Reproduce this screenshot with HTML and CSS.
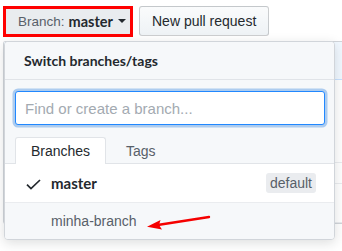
FILE: index.html
```html
<!DOCTYPE html>
<html>
<head>
<meta charset="utf-8">
<link rel="stylesheet" href="styles.css">
</head>
<body>
<div class="page">
  <div class="toolbar">
    <button class="btn branch-btn"><span class="muted">Branch:</span> <span class="strong">master</span><span class="caret"></span></button>
    <button class="btn">New pull request</button>
  </div>
  <div class="highlight"></div>
  <div class="files">
    <div class="files-head"></div>
    <div class="files-row r1"></div>
    <div class="files-row r2"></div>
    <div class="files-row r3"></div>
  </div>

  <div class="menu">
    <div class="menu-header">Switch branches/tags</div>
    <div class="menu-filter">
      <div class="filter-input">Find or create a branch...</div>
    </div>
    <div class="menu-tabs">
      <span class="tab selected">Branches</span>
      <span class="tab">Tags</span>
    </div>
    <div class="menu-item current">
      <svg class="check" viewBox="0 0 15 11" width="15" height="11"><path d="M1 5.6 L5 9.6 L14 1" fill="none" stroke="#24292e" stroke-width="1.7"/></svg>
      <span class="item-name strong">master</span>
      <span class="badge">default</span>
    </div>
    <div class="menu-item hover">
      <span class="item-name">minha-branch</span>
    </div>
  </div>

  <svg class="arrow" width="70" height="20" viewBox="0 0 70 20">
    <line x1="63" y1="2" x2="10" y2="10.2" stroke="#f50000" stroke-width="2.4" stroke-linecap="round"/>
    <path d="M1 11.7 L14.5 5 L13 10 L16 14.5 Z" fill="#f50000"/>
  </svg>
</div>
</body>
</html>
```

FILE: styles.css
```css
* { box-sizing: border-box; }
html, body { margin: 0; background: #fff; }
body {
  font-family: "Liberation Sans", Arial, sans-serif;
  font-size: 14px;
  color: #24292e;
}
.page {
  position: relative;
  width: 342px;
  height: 251px;
  overflow: hidden;
}
.toolbar {
  display: flex;
  align-items: flex-start;
  gap: 8px;
  padding: 6px 0 0 5px;
  height: 41px;
}
.btn {
  font: inherit;
  font-size: 14px;
  height: 30px;
  padding: 0 12px;
  border: 1px solid rgba(27,31,35,.2);
  border-radius: 3px;
  background: linear-gradient(#fafbfc, #eff3f6 90%);
  color: #24292e;
  display: flex;
  align-items: center;
}
.branch-btn {
  width: 126px;
  background: #e9ecef;
  padding-left: 12px;
  font-size: 13.5px;
}
.highlight {
  position: absolute;
  left: 3px;
  top: 6px;
  width: 130px;
  height: 31px;
  border: 3px solid #f00;
}
.muted { color: #586069; }
.branch-btn .muted { margin-right: 4px; }
.strong {
  font-weight: 700;
  font-family: Lato, "Liberation Sans", sans-serif;
  font-size: 15px;
}
.branch-btn .strong { font-size: 14.5px; }
.caret {
  display: inline-block;
  width: 0; height: 0;
  margin-left: 5px;
  border-top: 4px solid #24292e;
  border-left: 4px solid transparent;
  border-right: 4px solid transparent;
}

.files {
  margin-left: 3px;
  border: 1px solid #d1d5da;
  border-right: 0;
  border-radius: 3px 0 0 3px;
}
.files-head {
  height: 38px;
  background: #f1f8ff;
  border-bottom: 1px solid #c8e1ff;
}
.files-row { border-bottom: 1px solid #eaecef; }
.r1 { height: 83px; }
.r2 { height: 21px; }
.r3 { height: 39px; }

.menu {
  position: absolute;
  left: 4px;
  top: 41px;
  width: 331px;
  background: #fff;
  border: 1px solid #d1d5da;
  border-radius: 4px;
  box-shadow: 0 3px 12px rgba(27,31,35,.15);
  overflow: hidden;
}
.menu-header {
  height: 38px;
  padding: 0 19px;
  display: flex;
  align-items: center;
  background: #f6f8fa;
  border-bottom: 1px solid #e1e4e8;
  font-weight: 700;
  font-family: Lato, "Liberation Sans", sans-serif;
  font-size: 14px;
}
.menu-filter {
  background: #f6f8fa;
  padding: 11px 9px 12px 10px;
}
.filter-input {
  height: 34px;
  display: flex;
  align-items: center;
  padding-left: 9px;
  font-size: 15px;
  color: #a3aab1;
  background: #fff;
  border: 1px solid #2188ff;
  border-radius: 3px;
  box-shadow: 0 0 0 2.5px rgba(3,102,214,.3);
}
.menu-tabs {
  display: flex;
  background: #f6f8fa;
  padding-left: 10px;
  height: 27px;
  border-bottom: 1px solid #e1e4e8;
}
.tab {
  display: flex;
  align-items: center;
  height: 27px;
  padding: 0 19px;
  color: #586069;
  border: 1px solid transparent;
  border-bottom: 0;
  border-radius: 3px 3px 0 0;
}
.tab.selected {
  width: 91px;
  justify-content: center;
  padding: 0;
  color: #24292e;
  background: #fff;
  border-color: #e1e4e8;
}
.menu-item {
  display: flex;
  align-items: center;
  position: relative;
  padding: 0 18px 0 46px;
}
.menu-item.current {
  height: 39px;
  border-bottom: 1px solid #eaecef;
}
.menu-item.hover {
  height: 36px;
  background: #f6f8fa;
  color: #586069;
}
.check {
  position: absolute;
  left: 21px;
  top: 15px;
}
.item-name { flex: 1; }
.badge {
  font-size: 14px;
  color: #586069;
  background: #eaecef;
  border-radius: 3px;
  padding: 1px 4px 2px;
  height: 20px;
  display: flex;
  align-items: center;
}
.arrow {
  position: absolute;
  left: 146px;
  top: 215px;
}
```
